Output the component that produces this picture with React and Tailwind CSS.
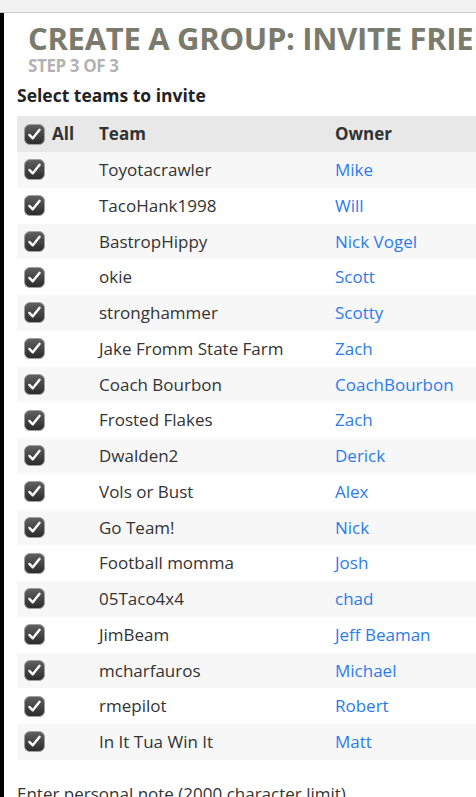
const teams = [
  ['Toyotacrawler', 'Mike'],
  ['TacoHank1998', 'Will'],
  ['BastropHippy', 'Nick Vogel'],
  ['okie', 'Scott'],
  ['stronghammer', 'Scotty'],
  ['Jake Fromm State Farm', 'Zach'],
  ['Coach Bourbon', 'CoachBourbon'],
  ['Frosted Flakes', 'Zach'],
  ['Dwalden2', 'Derick'],
  ['Vols or Bust', 'Alex'],
  ['Go Team!', 'Nick'],
  ['Football momma', 'Josh'],
  ['05Taco4x4', 'chad'],
  ['JimBeam', 'Jeff Beaman'],
  ['mcharfauros', 'Michael'],
  ['rmepilot', 'Robert'],
  ['In It Tua Win It', 'Matt'],
];

function Check() {
  return (
    <span className="inline-flex w-[21px] h-[21px] rounded-[6px] border border-[#a0a0a0] bg-gradient-to-b from-[#606060] to-[#2c2c2c] items-center justify-center">
      <svg viewBox="0 0 20 20" className="w-[17px] h-[17px]">
        <path d="M4 10.5 L8 14.5 L16 4.5" fill="none" stroke="#fff" strokeWidth="2.8" strokeLinecap="round" strokeLinejoin="round" />
      </svg>
    </span>
  );
}

export default function App() {
  return (
    <div className="w-[476px] h-[797px] overflow-hidden bg-white font-['Open_Sans',sans-serif]">
      <div className="h-[13px] bg-[#f2f2f2] border-b border-[#c8c8c8]" />
      <div className="flex h-[784px]">
        <div className="w-[4px] shrink-0 bg-black" />
        <div className="flex-1 min-w-0 pl-[13px]">
          <h1 className="mt-[9px] ml-[11px] text-[31px] leading-[32px] font-bold text-[#7a7b6d] tracking-[-0.3px] whitespace-nowrap">
            CREATE A GROUP: INVITE FRIENDS
          </h1>
          <div className="mt-[2px] ml-[11px] text-[17px] leading-[20px] font-bold text-[#b3b3b3] tracking-[-0.4px]">
            STEP 3 OF 3
          </div>
          <h2 className="mt-[8px] text-[17.5px] leading-[22px] font-bold text-[#222]">Select teams to invite</h2>
          <table className="mt-[10px] w-[500px] border-collapse text-[17px] text-[#333]">
            <thead>
              <tr className="bg-[#e8e8e8] h-[36px]">
                <th className="w-[82px] pl-[7px] text-left font-bold">
                  <span className="flex items-center gap-[7px]">
                    <Check />
                    <span>All</span>
                  </span>
                </th>
                <th className="w-[236px] text-left font-bold">Team</th>
                <th className="text-left font-bold">Owner</th>
              </tr>
            </thead>
            <tbody>
              {teams.map(([team, owner], i) => (
                <tr key={i} className={`h-[35.75px] ${i % 2 === 0 ? 'bg-[#f7f7f7]' : 'bg-white'}`}>
                  <td className="pl-[7px] align-middle">
                    <span className="flex items-center"><Check /></span>
                  </td>
                  <td>{team}</td>
                  <td className="text-[#2b7bf0]">{owner}</td>
                </tr>
              ))}
            </tbody>
          </table>
          <p className="mt-[22px] text-[17px] leading-[24px] text-[#333] whitespace-nowrap">Enter personal note (2000 character limit)</p>
        </div>
      </div>
    </div>
  );
}
